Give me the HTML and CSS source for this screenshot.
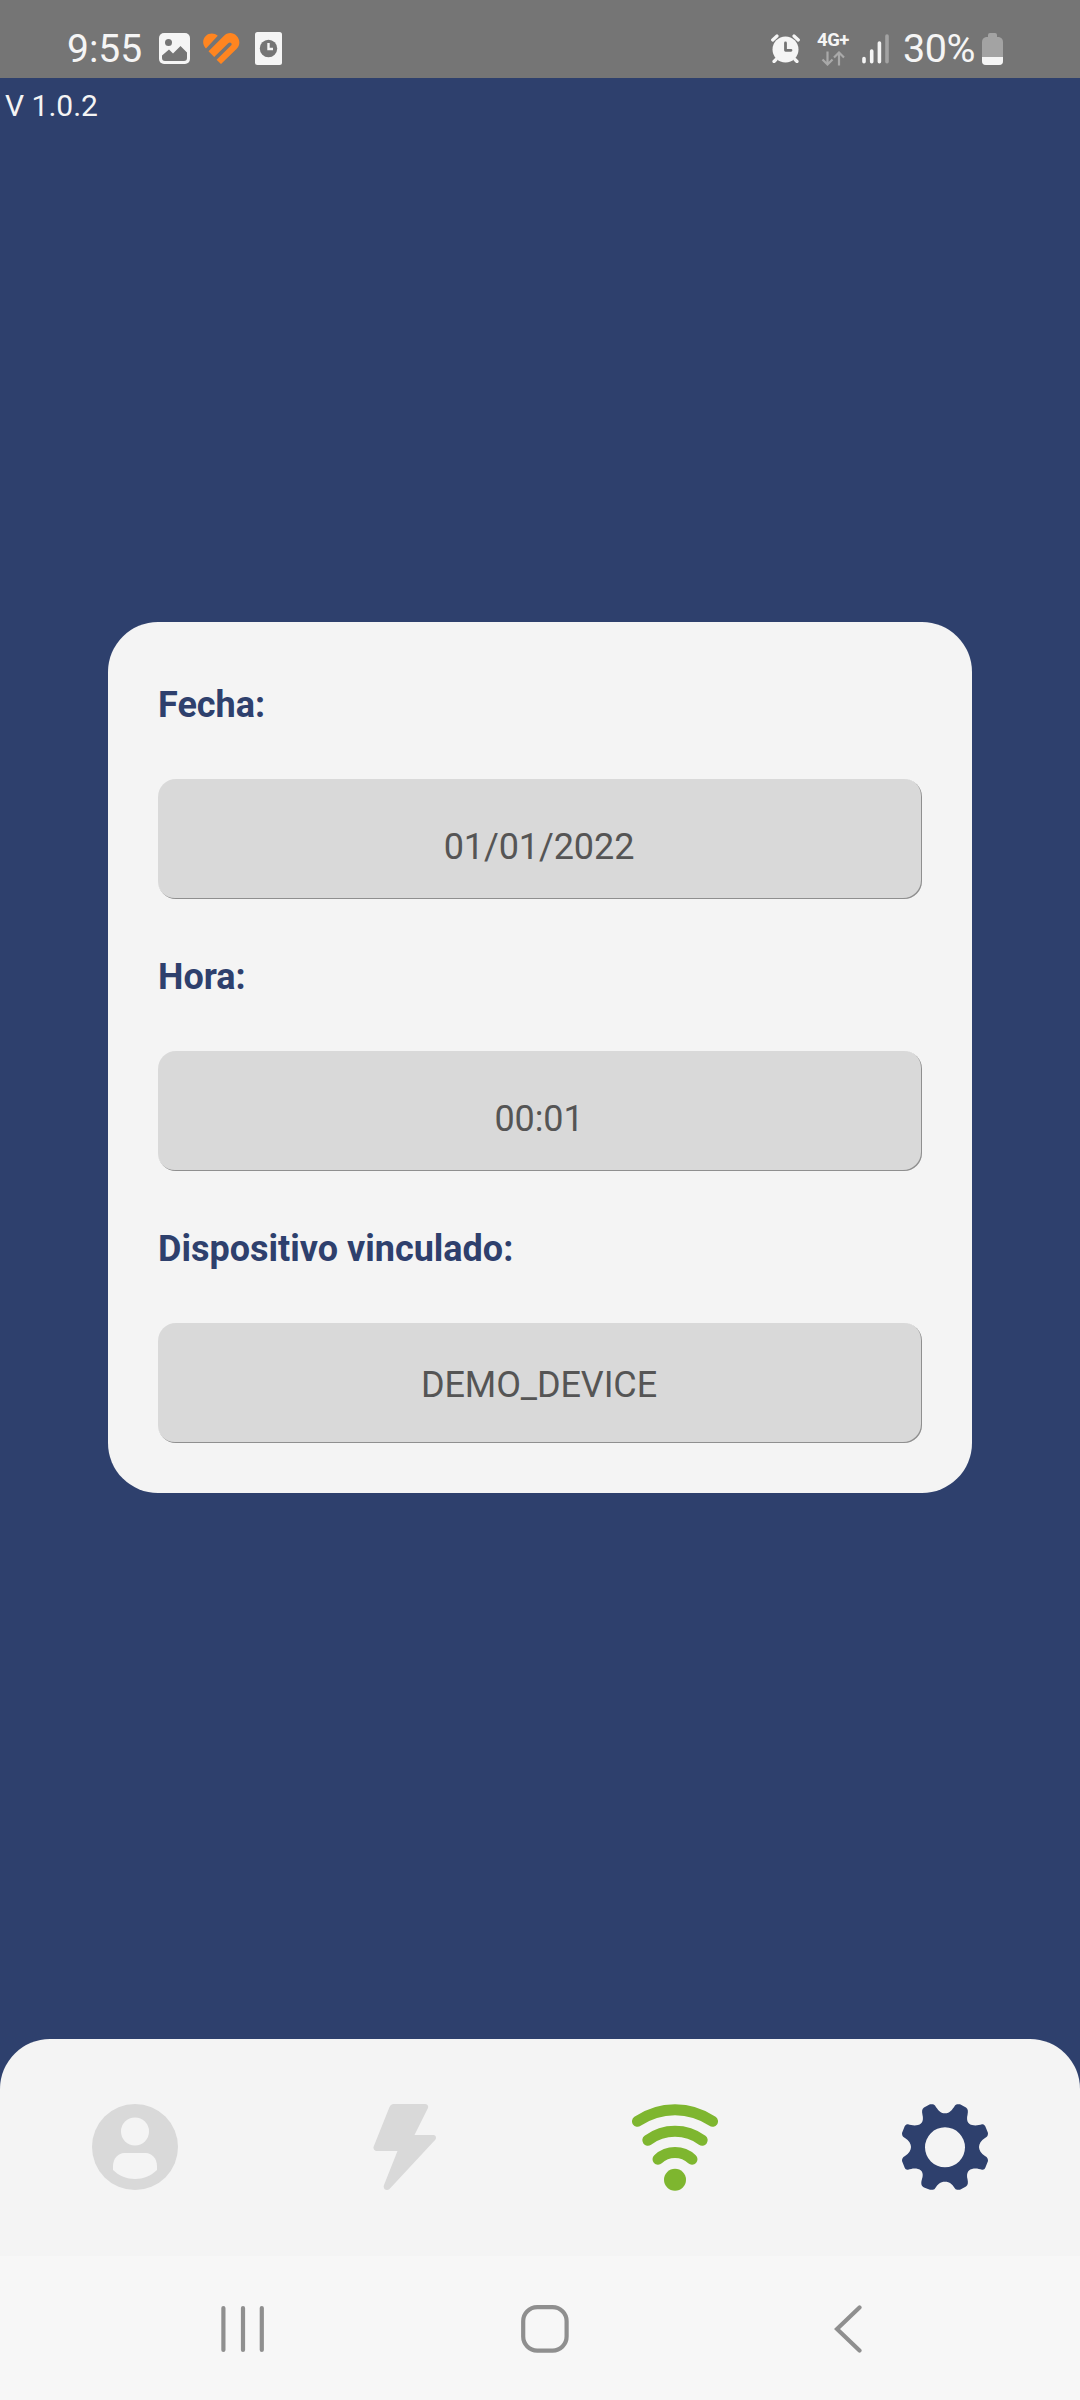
FILE: index.html
```html
<!DOCTYPE html>
<html lang="es">
<head>
  <meta charset="UTF-8" />
  <meta name="viewport" content="width=device-width, initial-scale=1.0" />
  <title>Ajustes</title>
  <link rel="stylesheet" href="styles.css">
</head>
<body>
  <header class="barra-estado">
    <div class="estado-izq">
      <span class="hora">9:55</span>
      <svg class="ico-foto" width="31" height="31" viewBox="0 0 31 31">
        <rect width="31" height="31" rx="5" fill="#f5f5f5" />
        <circle cx="9.5" cy="9.5" r="3.5" fill="#757575" />
        <path d="M3 22.5 L10 16.5 L14 20.5 L21.5 13 L28 19.5 V25 Q28 28 25 28 H6 Q3 28 3 25Z" fill="#757575" />
      </svg>
      <svg class="ico-corazon" width="37" height="31" viewBox="0 0 37 31">
        <path d="M3 15.5 C-1 11.5 -.5 6 2.8 3 C6 0 11 -.3 14.8 2.7Z" fill="#ff8520" />
        <path d="M5.5 18.2 L20.5 3.2 C24.5 -1 30 -.8 33.5 2.8 C37.3 6.8 37.3 12.3 33.5 16 L18 31 L13.6 26.7 L28 12.6 C29.8 10.8 27.3 8.3 25.5 10 L11.2 24Z" fill="#ff8520" />
      </svg>
      <svg class="ico-doc" width="27" height="33" viewBox="0 0 27 33">
        <rect width="27" height="33" rx="2.5" fill="#f5f5f5" />
        <circle cx="13.5" cy="16.5" r="8.7" fill="#757575" />
        <path d="M13.5 11 V17 H18" fill="none" stroke="#f5f5f5" stroke-width="2.4" />
      </svg>
    </div>
    <div class="estado-der">
      <svg width="29" height="29" viewBox="0 0 29 29">
        <circle cx="14.5" cy="15.5" r="13" fill="#f5f5f5" />
        <path d="M1.7 6 L6 2 M27.3 6 L23 2 M5 25.5 L3 27.5 M24 25.5 L26 27.5" stroke="#f5f5f5" stroke-width="3.2" stroke-linecap="round" />
        <path d="M14.5 9 V16.3 H20" fill="none" stroke="#757575" stroke-width="2.8" stroke-linecap="round" stroke-linejoin="round" />
      </svg>
      <div class="red">
        <span>4G+</span>
        <svg width="24" height="15" viewBox="0 0 24 15">
          <path d="M6.5 .5 V13.5 M1.5 8.5 L6.5 13.5 L11.5 8.5 M18 14.5 V1.5 M13 6.5 L18 1.5 L23 6.5" fill="none" stroke="#a9a9a9" stroke-width="2.2" />
        </svg>
      </div>
      <svg class="senal" width="28" height="30" viewBox="0 0 28 30">
        <g stroke="#f5f5f5" stroke-width="3.6" stroke-linecap="round">
          <path d="M2 24.5 V27.7 M9.7 17 V27.7 M17.4 9 V27.7" />
          <path d="M25 2 V27.7" stroke="#a3a3a3" />
        </g>
      </svg>
      <span class="porcentaje">30%</span>
      <svg class="bateria" width="21" height="32" viewBox="0 0 21 32">
        <path d="M6 2 Q6 0 8 0 H13 Q15 0 15 2 V4 H17 Q21 5 21 9 V28 Q21 32 17 32 H4 Q0 32 0 28 V9 Q0 5 4 4 H6Z" fill="#a3a3a3" />
        <path d="M0 24 H21 V28 Q21 32 17 32 H4 Q0 32 0 28Z" fill="#f5f5f5" />
      </svg>
    </div>
  </header>

  <main class="pantalla">
    <p class="version">V 1.0.2</p>
    <section class="tarjeta">
      <label>Fecha:</label>
      <div class="campo campo-fecha">01/01/2022</div>
      <label>Hora:</label>
      <div class="campo campo-fecha">00:01</div>
      <label>Dispositivo vinculado:</label>
      <div class="campo">DEMO_DEVICE</div>
    </section>
  </main>

  <div class="fondo-menu">
    <nav class="menu">
      <a>
        <svg width="86" height="86" viewBox="0 0 86 86">
          <circle cx="43" cy="43" r="43" fill="#d9d9d9" />
          <circle cx="43" cy="27.5" r="14" fill="#f4f4f4" />
          <path d="M21 66 V62 C21 54 27 49 32 49 H54 C59 49 65 54 65 62 V66 C59 72 51 75 43 75 C35 75 27 72 21 66Z" fill="#f4f4f4" />
        </svg>
      </a>
      <a>
        <svg width="86" height="86" viewBox="0 0 86 86">
          <path d="M31 0 H63 Q67 .5 66 4 L52.5 31 H72 Q75 32 73.5 35.5 L27.5 85 Q25.5 86.5 23 85.5 Q21 84 22 81 L35.5 47 H14 Q11 46 11.5 43 L27.5 3 Q28.5 .3 31 0Z" fill="#d9d9d9" />
        </svg>
      </a>
      <a>
        <svg width="86" height="87" viewBox="0 0 86 87">
          <g fill="none" stroke="#7eb62f" stroke-width="11" stroke-linecap="round">
            <path d="M5.5 17.3 A66.4 66.4 0 0 1 80.5 17.3" />
            <path d="M15.8 36.2 A46 46 0 0 1 70.2 36.2" />
            <path d="M26 55.2 A25 25 0 0 1 60 55.2" />
          </g>
          <circle cx="43" cy="75.8" r="11" fill="#7eb62f" />
        </svg>
      </a>
      <a>
        <svg width="86" height="86" viewBox="0 0 86 86">
          <path fill="#2e406d" fill-rule="evenodd" d="M43 9.3 C48 9.3 50 6 53 1.5 C54 0 56 0 58 .3 L64 3.5 C66 5 66.3 7 65.5 11 C64.5 15 65 20 70 21 C74 22 77 21 80 20.2 C82 20 83 21 84 24 L86 29 C86 31 85.5 33 83 34 C79 36.5 77 40 77 43 C77 46 79 49.5 83 52 C85.5 53 86 55 86 57 L84 62 C83 65 82 66 80 65.8 C77 65 74 64 70 65 C65 66 64.5 71 65.5 75 C66.3 79 66 81 64 82.5 L58 85.7 C56 86 54 86 53 84.5 C50 80 48 77.7 43 77.7 C38 77.7 36 80 33 84.5 C32 86 30 86 28 85.7 L22 83.5 C19 82 18.8 79 20 75 C21.5 71 21 66 16 65 C12 64 9 65 6 65.8 C4 66 3 65 2 62 L0 57 C0 55 .5 53 3 52 C7 49.5 9 46 9 43 C9 40 7 36.5 3 34 C.5 33 0 31 0 29 L2 24 C3 21 4 20 6 20.2 C9 21 12 22 16 21 C21 20 21.5 15 20.5 11 C19.7 7 20 5 22 3.5 L28 .3 C30 0 32 0 33 1.5 C36 6 38 9.3 43 9.3Z M43 23.3 A20 20 0 1 0 43 63.3 A20 20 0 1 0 43 23.3Z" />
        </svg>
      </a>
    </nav>
  </div>

  <footer class="barra-sistema">
    <svg width="44" height="48" viewBox="0 0 44 48">
      <path d="M2.4 3 V45 M22 3 V45 M40.8 3 V45" stroke="#8f8f8f" stroke-width="4.2" stroke-linecap="round" />
    </svg>
    <svg class="inicio" width="48" height="48" viewBox="0 0 48 48">
      <rect x="2.2" y="2.2" width="43.4" height="43.4" rx="14" fill="none" stroke="#8f8f8f" stroke-width="4.2" />
    </svg>
    <svg width="28" height="48" viewBox="0 0 28 48">
      <path d="M25.5 2.5 L3 24 L25.5 45.5" fill="none" stroke="#8f8f8f" stroke-width="4.2" stroke-linecap="round" />
    </svg>
  </footer>
</body>
</html>
```
FILE: styles.css
```css
* {
  box-sizing: border-box;
}
body {
  font-family: Roboto, sans-serif;
  margin: 0;
  height: 2400px;
  display: flex;
  flex-direction: column;
  background-color: #2e406d;
}
svg {
  display: block;
  flex: none;
}
.barra-estado {
  height: 78px;
  padding: 18px 77px 0 66px;
  display: flex;
  justify-content: space-between;
  background-color: #757575;
  color: #f5f5f5;
}
.estado-izq, .estado-der {
  display: flex;
  align-items: center;
  height: 61px;
}
.hora {
  width: 93px;
  padding-left: 1px;
  font-size: 39px;
}
.ico-corazon {
  margin-left: 13px;
}
.ico-doc {
  margin-left: 15px;
}
.red {
  width: 34px;
  margin-left: 16px;
  display: flex;
  flex-direction: column;
  align-items: center;
  gap: 2px;
  font-size: 18.5px;
  font-weight: bold;
  line-height: 17px;
  letter-spacing: -0.5px;
}
.senal {
  margin-left: 12px;
}
.porcentaje {
  margin-left: 13px;
  width: 79px;
  font-size: 39.5px;
  letter-spacing: -0.5px;
}
.pantalla {
  flex: 1;
}
.version {
  margin: 0;
  padding: 10px 0 0 5px;
  height: 544px;
  font-size: 30px;
  line-height: 36px;
  color: #f4f4f4;
}
.tarjeta {
  width: 864px;
  height: 871px;
  margin: 0 auto;
  padding: 5px 50px 50px;
  border-radius: 50px;
  background-color: #f4f4f4;
}
.tarjeta label {
  display: block;
  height: 152px;
  padding-top: 56px;
  font-size: 36px;
  font-weight: bold;
  line-height: 44px;
  color: #2e406d;
}
.campo {
  height: 120px;
  padding-right: 2px;
  border-radius: 18px;
  background-color: #d9d9d9;
  box-shadow: inset -1px -1px 0 #8f8f8f;
  color: #555;
  font-size: 36px;
  line-height: 124px;
  letter-spacing: -0.1px;
  text-align: center;
}
.campo-fecha {
  padding-top: 6px;
}
.fondo-menu {
  background-color: #2e406d;
}
.menu {
  height: 217px;
  display: grid;
  grid-template-columns: repeat(4, 1fr);
  justify-items: center;
  padding-top: 65px;
  border-radius: 50px 50px 0 0;
  background-color: #f4f4f4;
}
.barra-sistema {
  height: 144px;
  padding: 2px 218px 0 221px;
  display: flex;
  align-items: center;
  justify-content: space-between;
  background-color: #f7f7f7;
}
.inicio {
  margin-right: 9px;
}
```
